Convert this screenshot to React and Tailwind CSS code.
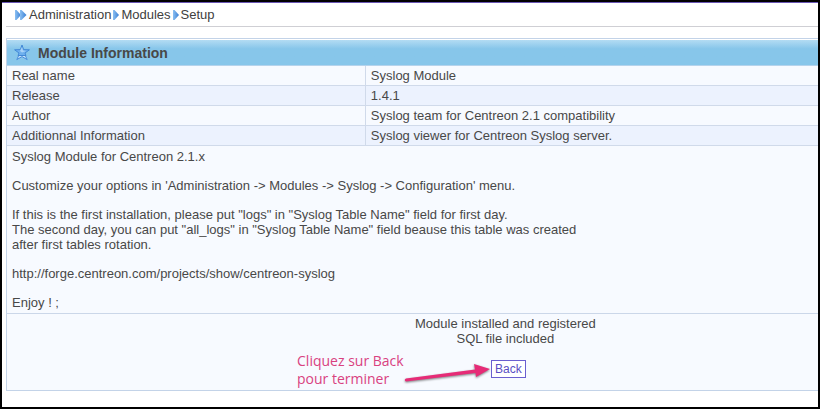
import React from "react";

const crumbs = ["Administration", "Modules", "Setup"];

const infos = [
  { label: "Real name", value: "Syslog Module" },
  { label: "Release", value: "1.4.1" },
  { label: "Author", value: "Syslog team for Centreon 2.1 compatibility" },
  { label: "Additionnal Information", value: "Syslog viewer for Centreon Syslog server." },
];

function Chevron({ double }) {
  return (
    <svg width={double ? 12 : 6} height="10" viewBox={double ? "0 0 12 10" : "0 0 6 10"} aria-hidden="true">
      <defs>
        <linearGradient id="chevron" x1="0" y1="0" x2="1" y2="0">
          <stop offset="0" stopColor="#8cc0f2" />
          <stop offset="1" stopColor="#3a80d4" />
        </linearGradient>
      </defs>
      <path d="M0 0 L1.5 0 L6 5 L1.5 10 L0 10 Z" fill="url(#chevron)" />
      {double ? <path d="M5 0 L6.5 0 L11.5 5 L6.5 10 L5 10 Z" fill="url(#chevron)" /> : null}
    </svg>
  );
}

function StarIcon() {
  return (
    <svg width="16" height="17" viewBox="0 0 16 17" aria-hidden="true">
      <path
        d="M8 1 L9.6 5.6 L15.4 5.8 L11 9 L12 11.5 L4 11.5 L5 9 L0.6 5.8 L6.4 5.6 Z"
        fill="#6fb0ee"
        stroke="#4389d6"
        strokeLinejoin="round"
      />
      <path d="M8 3 L9 6.6 L12 7 L8 8.5 L6 7 Z" fill="#a9d3f8" />
      <path d="M4.5 12 L2.8 15.6 L8 12.6 L13.2 15.6 L11.5 12" fill="#c9e5fb" stroke="#4a8ddb" />
    </svg>
  );
}

function Arrow() {
  return (
    <svg width="90" height="22" viewBox="0 0 90 22" aria-hidden="true" className="drop-shadow-[0_1px_1px_rgba(0,0,0,0.5)]">
      <path d="M5 14.5 L74 5.5 L73 0 L89 5 L75 13 L74.5 9 L5 17.5 Q2.5 16 5 14.5 Z" fill="#e62b77" />
    </svg>
  );
}

export default function App() {
  return (
    <div className="overflow-hidden border-2 border-b-3 border-black bg-white font-['Liberation_Sans',Arial,sans-serif] text-[13px] text-[#484848]">
      <div className="border-t border-[#6a57b5] pb-4 pl-1">
        <nav className="flex h-6 items-center gap-0.5 border-b border-[#cfcfd4] pl-[9px]">
          {crumbs.map((crumb, i) => (
            <React.Fragment key={crumb}>
              <Chevron double={i === 0} />
              <a href="#" className="text-[#404040]">
                {crumb}
              </a>
            </React.Fragment>
          ))}
        </nav>

        {/* the list is wider than the window, its right side is cut */}
        <table className="mt-[11px] w-[123%] table-fixed border-separate border-spacing-0 border border-[#c3d3e8] bg-[#f7faff]">
          <colgroup>
            <col className="w-[36%]" />
            <col />
          </colgroup>
          <thead>
            <tr>
              <th colSpan={2} className="border-t border-b border-t-white border-b-[#b5d3ec] p-0 text-left">
                <div className="flex h-[25px] items-center gap-2 bg-linear-to-b from-[#b3dcf3] to-[#87c6ea] to-35% pl-[7px] text-sm">
                  <StarIcon />
                  Module Information
                </div>
              </th>
            </tr>
          </thead>
          <tbody>
            {infos.map((info) => (
              <tr key={info.label} className="even:bg-[#ecf2fe]">
                <td className="h-5 border-r border-b border-[#d0daea] p-0 pl-[5px] leading-[19px]">{info.label}</td>
                <td className="h-5 border-b border-[#d0daea] p-0 pl-[5px] leading-[19px]">{info.value}</td>
              </tr>
            ))}
            <tr>
              <td colSpan={2} className="border-b border-[#cbd7e9] py-[3px] pl-[5px]">
                <div className="flex flex-col gap-3.5 leading-[15px]">
                  <p>Syslog Module for Centreon 2.1.x</p>
                  <p>Customize your options in 'Administration -&gt; Modules -&gt; Syslog -&gt; Configuration' menu.</p>
                  <p>
                    If this is the first installation, please put "logs" in "Syslog Table Name" field for first day.
                    <br />
                    The second day, you can put "all_logs" in "Syslog Table Name" field beause this table was created
                    <br />
                    after first tables rotation.
                  </p>
                  <p>http://forge.centreon.com/projects/show/centreon-syslog</p>
                  <p>Enjoy ! ;</p>
                </div>
              </td>
            </tr>
            <tr>
              <td colSpan={2} className="px-0 pt-0.5 pb-3 text-center leading-[15px]">
                <p>
                  Module installed and registered
                  <br />
                  SQL file included
                </p>
                <div className="mt-3.5 flex justify-center pl-1.5">
                  <div className="relative">
                    <button type="button" className="block h-[18px] border border-[#6a5fd0] bg-white px-[3px] text-xs text-[#5a4fc4]">
                      Back
                    </button>
                    <div className="absolute -top-2 right-full flex items-start">
                      <p className="w-28 text-left font-['Open_Sans',sans-serif] text-sm leading-[18px] font-medium text-[#d9427f]">
                        Cliquez sur Back pour terminer
                      </p>
                      <div className="-ml-2 pt-3">
                        <Arrow />
                      </div>
                    </div>
                  </div>
                </div>
              </td>
            </tr>
          </tbody>
        </table>
      </div>
    </div>
  );
}
